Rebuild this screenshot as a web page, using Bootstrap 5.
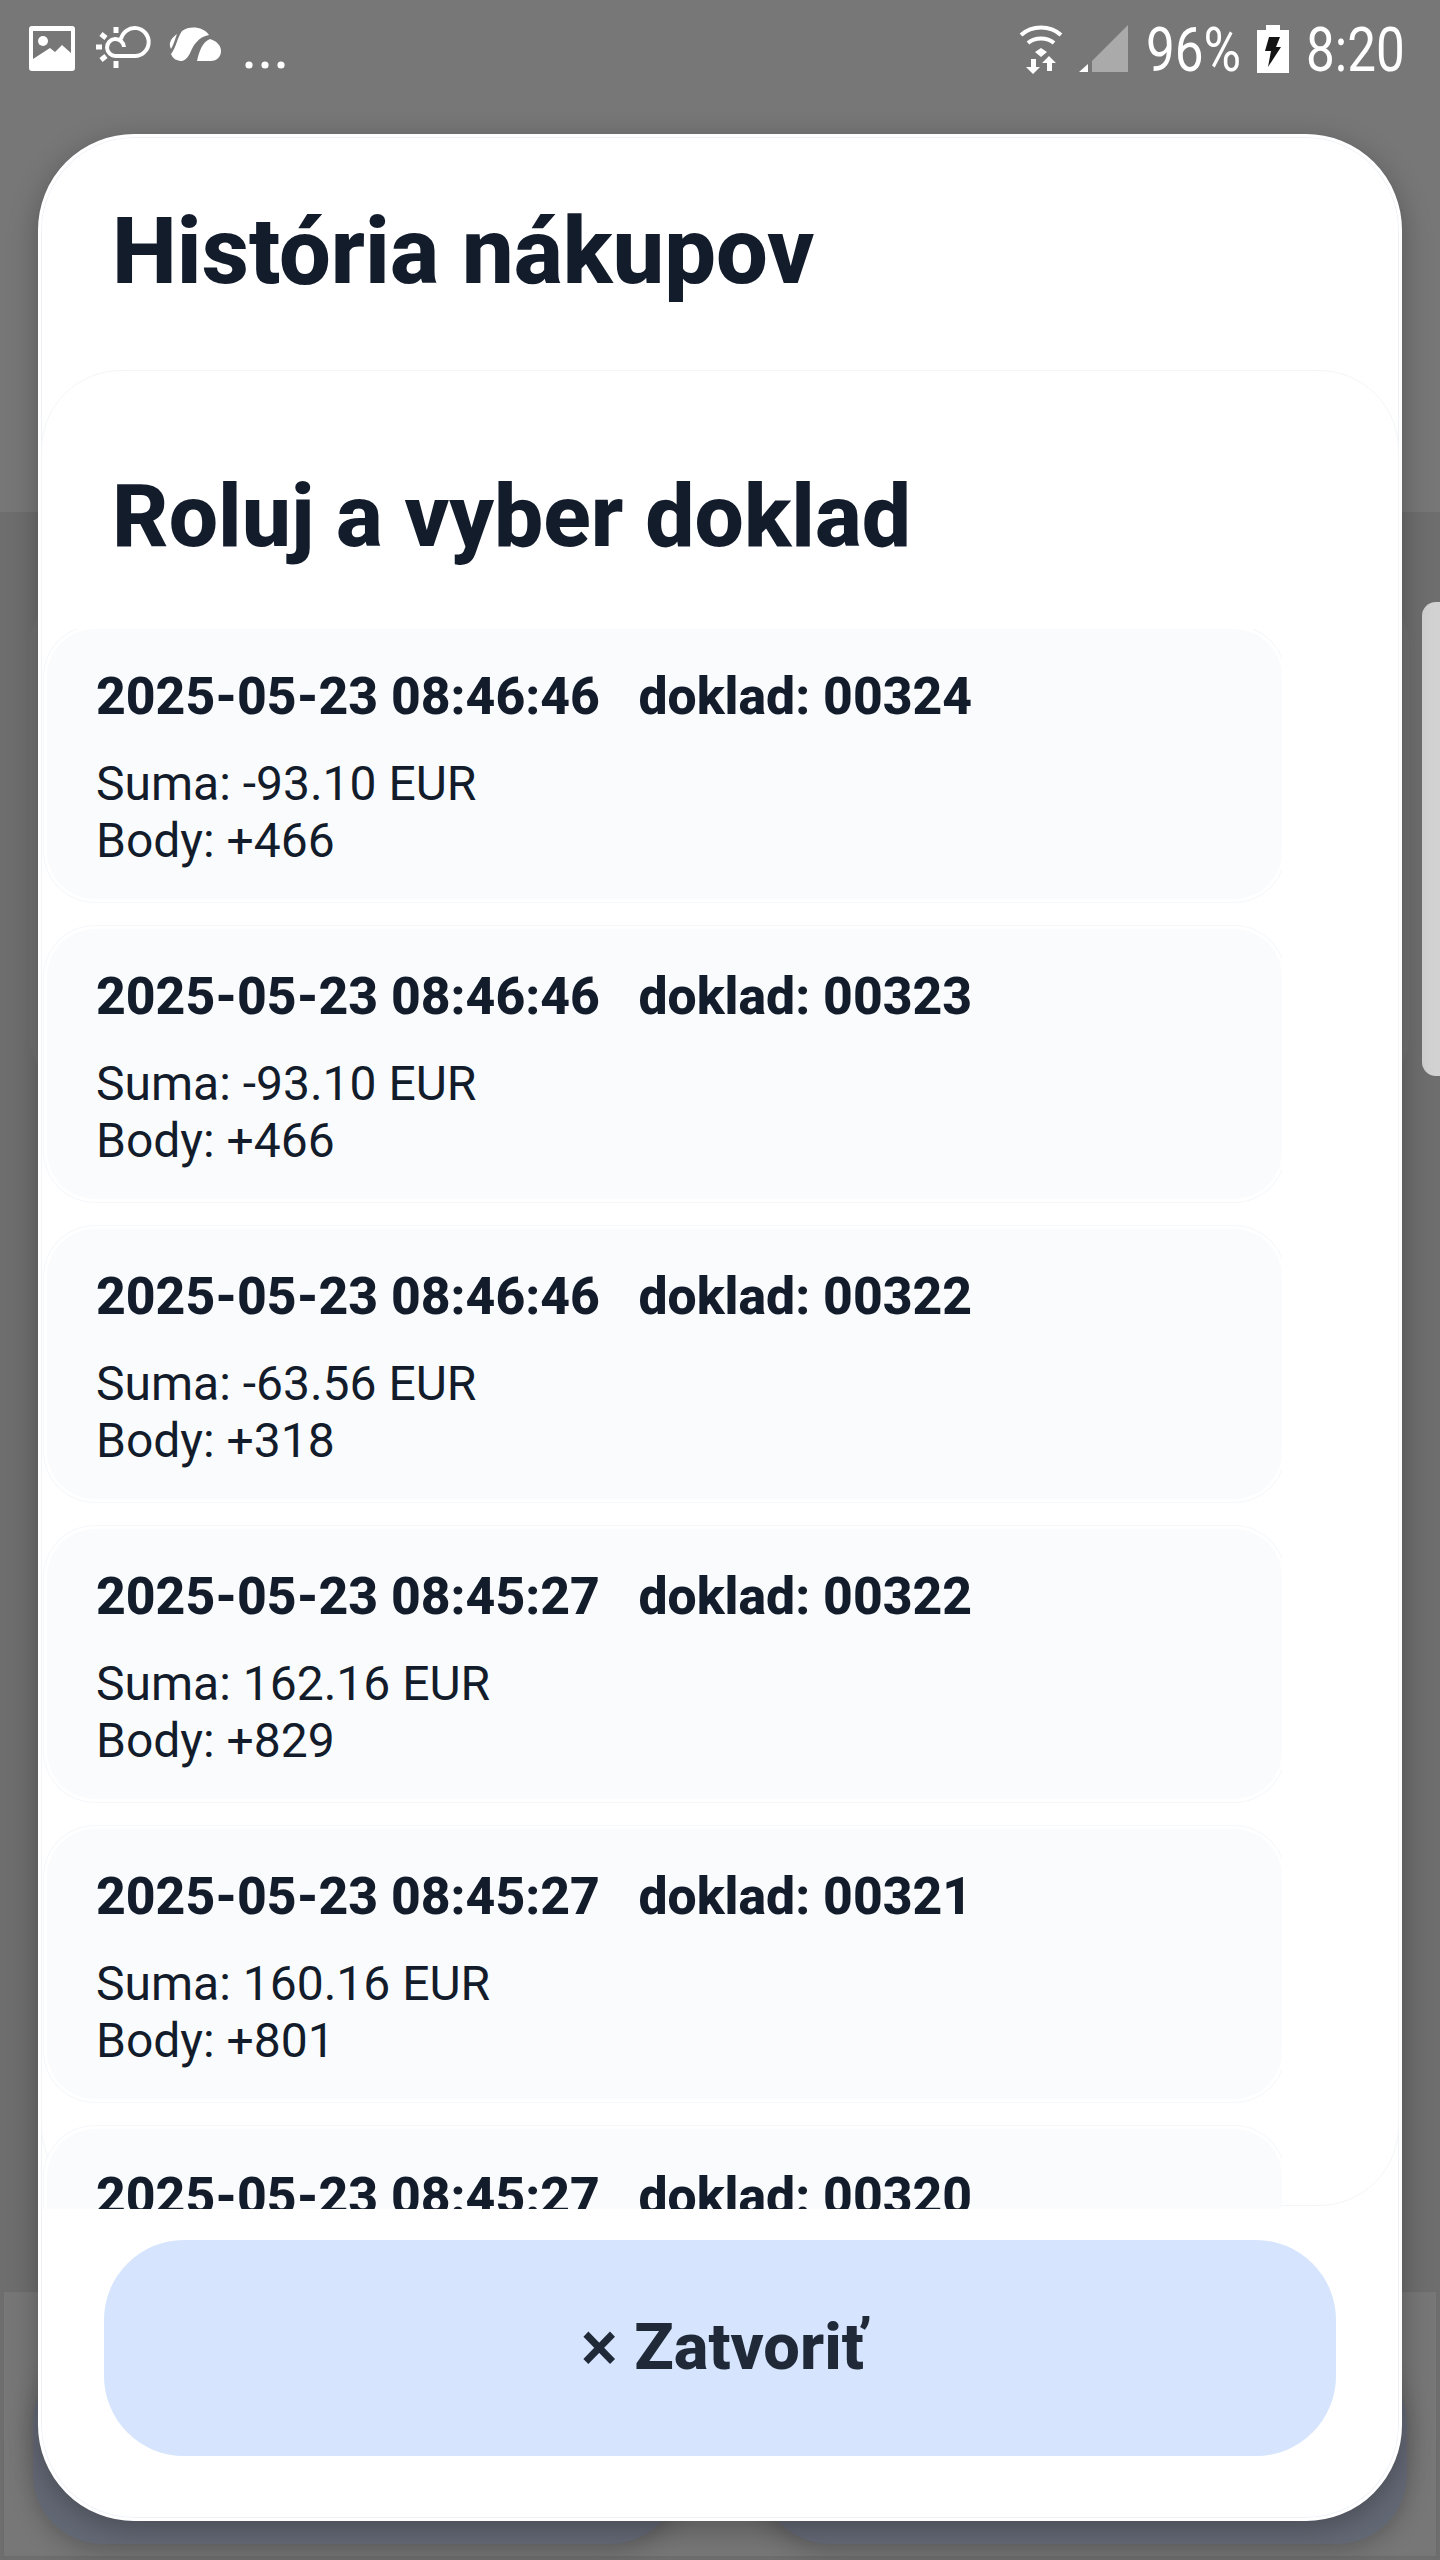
<!DOCTYPE html>
<html lang="sk">
<head>
  <meta charset="UTF-8">
  <meta name="viewport" content="width=device-width, initial-scale=1.0">
  <title>História nákupov</title>
  <link rel="stylesheet" href="https://cdn.jsdelivr.net/npm/bootstrap@5.3.0/dist/css/bootstrap.min.css">
  <style>
    body { background: #6e6e6e; font-family: Roboto, "Liberation Sans", sans-serif; color: #131c2b; }
    .screen { width: 1440px; height: 2560px; position: relative; overflow: hidden; }

    /* dimmed page behind the dialog */
    .top-band { height: 512px; background: #777; padding: 25px 35px 0 29px; }
    .mid-band { height: 1780px; padding-top: 90px; }
    .under-card { width: 1379px; height: 478px; margin-left: 30px; border-radius: 40px; background: #727272; }
    .scroll-pill { width: 18px; height: 474px; background: #d2d2d2; border-radius: 14px 0 0 14px; }
    .bottom-band { height: 264px; margin: 0 4px; background: #777; box-shadow: 0 0 0 1px #6c6c6c; padding: 61px 29px 12px; gap: 80px; }
    .under-btn { flex: 1; border-radius: 70px; background: #646976; box-shadow: 0 6px 24px rgba(0,0,0,.22); }

    /* status bar */
    .status-left { gap: 21px; }
    .status-right { height: 50px; }
    .status-txt { font-size: 61px; font-weight: 400; color: #fff; line-height: 50px; display: inline-block; transform: scaleX(.84); }
    .status-pct { width: 94px; margin-left: 17px; margin-right: 3px; transform-origin: left center; white-space: nowrap; }
    .status-time { width: 98px; margin-left: 17px; margin-right: 1px; transform-origin: left center; white-space: nowrap; }

    /* dialog */
    .sheet { position: absolute; left: 38px; top: 134px; width: 1364px; height: 2387px; background: #fff; border: 3px solid #fff; border-radius: 96px; box-shadow: inset 0 0 0 1px #eef2f8, 0 8px 30px rgba(0,0,0,.28); }
    .sheet-title { font-size: 92px; font-weight: 800; line-height: 1; margin: 0; height: 233px; padding: 69px 0 0 71px; color: #131c2b; }
    .sheet-body { height: 1836px; border: 1px solid #f3f5f9; border-radius: 80px; }
    .sheet-sub { font-size: 87.6px; font-weight: 800; line-height: 1; margin: 0; padding: 102px 0 0 70px; height: 258px; color: #131c2b; }
    .entries { height: 1580px; overflow: hidden; padding: 0 0 0 5px; width: 1240px; }
    .entry { height: 270px; margin-bottom: 30px; background: #fafbfd; border: 0; border-radius: 48px; padding: 38px 49px 0; color: #131c2b; box-shadow: 0 0 0 3px #fff, 0 0 0 4px #f5f7fa; }
    .entry-head { font-size: 51.7px; font-weight: 800; line-height: 60px; margin-bottom: 28px; white-space: pre; }
    .entry-line { font-size: 48px; line-height: 57px; }
    .sheet-foot { padding: 34px 63px 0; }
    .close-btn { display: block; width: 1232px; height: 216px; border: 0; border-radius: 80px; padding-left: 18px; background: #d6e4fe; color: #1f2937; font-size: 65px; font-weight: 800; }
    .close-btn:hover, .close-btn:active { background: #d6e4fe !important; color: #1f2937 !important; }
    .close-x { font-size: 70px; font-weight: 500; line-height: 1; vertical-align: -2px; }
  </style>
</head>
<body>
<div class="screen">

  <!-- pozadie -->
  <div class="top-band d-flex justify-content-between align-items-start">
    <div class="status-left d-flex align-items-start">
      <svg width="46" height="46" viewBox="0 0 46 46"><rect y="1" width="46" height="45" rx="3" fill="#fff"/><path d="M4 6H42V28L33 20L26 27L21 23L4 34Z" fill="#777"/><circle cx="14" cy="16" r="5" fill="#fff"/></svg>
      <svg width="57" height="46" viewBox="96 27 57 46" fill="none" stroke="#fff" stroke-width="4" style="margin-left:-1px;margin-right:-4px"><path d="M125 49A8.5 8.5 0 1 0 117 58H136A14 14 0 1 0 122 41"/><path d="M117 29V35M117 63V70M97 49H103M102 36L107 40M102 62L107 58" stroke-width="5"/></svg>
      <svg width="53" height="40" viewBox="170 29 53 40" fill="#fff"><path d="M178 38C172 42 169 48 172 53C175 48 176 43 178 38Z"/><path d="M183 35C191 29 205 31 210 39C200 41 195 48 192 55C190 60 187 64 183 65C178 65 174 63 172 58C177 52 178 42 183 35Z"/><path d="M198 65C200 56 203 46 211 43C218 45 222 50 222 55C222 62 216 65 212 65Z"/></svg>
      <svg width="40" height="50" viewBox="245 28 40 50" fill="#fff" style="margin-left:2px"><circle cx="249" cy="68" r="3.6"/><circle cx="265" cy="68" r="3.6"/><circle cx="281" cy="68" r="3.6"/></svg>
    </div>
    <div class="status-right d-flex align-items-start">
      <svg width="44" height="50" viewBox="1017 24 44 50"><g fill="none" stroke="#fff" stroke-width="4"><path d="M1019 34C1030 24 1048 24 1059 34"/><path d="M1026 42C1033 36 1045 36 1052 42"/></g><path d="M1033 51L1039 47L1045 51L1039 56Z" fill="#fff"/><path d="M1029 58H1034V66H1038L1031 73L1024 66H1029ZM1045 70H1050V62H1054L1047 55L1040 62H1045Z" fill="#fff"/></svg>
      <svg width="50" height="48" viewBox="1077 25 50 48" style="margin-left:16px"><path d="M1090 72V61L1126 25V72Z" fill="#aaa"/><path d="M1077 72L1086 64V72Z" fill="#fff"/></svg>
      <span class="status-txt status-pct">96%</span>
      <svg width="32" height="48" viewBox="1256 25 32 48" style="margin-left:14px"><path d="M1256 30H1265V25H1279V30H1288V73H1256Z" fill="#fff"/><path d="M1268 37H1279L1275 47H1280L1267 67L1270 51H1264Z" fill="#141414"/></svg>
      <span class="status-txt status-time">8:20</span>
    </div>
  </div>
  <div class="mid-band d-flex justify-content-between align-items-start">
    <div class="under-card"></div>
    <div class="scroll-pill"></div>
  </div>
  <div class="bottom-band d-flex">
    <div class="under-btn"></div>
    <div class="under-btn"></div>
  </div>

  <!-- dialog -->
  <div class="sheet d-flex flex-column">
    <h1 class="sheet-title">História nákupov</h1>
    <div class="sheet-body">
      <h2 class="sheet-sub">Roluj a vyber doklad</h2>
      <div class="entries" id="entries"></div>
    </div>
    <div class="sheet-foot">
      <button type="button" class="btn close-btn"><span class="close-x">×</span> Zatvoriť</button>
    </div>
  </div>
</div>

<script>
  const doklady = [
    ['2025-05-23 08:46:46', '00324', '-93.10', '+466'],
    ['2025-05-23 08:46:46', '00323', '-93.10', '+466'],
    ['2025-05-23 08:46:46', '00322', '-63.56', '+318'],
    ['2025-05-23 08:45:27', '00322', '162.16', '+829'],
    ['2025-05-23 08:45:27', '00321', '160.16', '+801'],
    ['2025-05-23 08:45:27', '00320', '160.16', '+801']
  ];
  document.getElementById('entries').innerHTML = doklady.map(d => `
    <div class="card entry">
      <div class="entry-head">${d[0]}   doklad: ${d[1]}</div>
      <div class="entry-line">Suma: ${d[2]} EUR</div>
      <div class="entry-line">Body: ${d[3]}</div>
    </div>
  `).join('');
</script>
<script src="https://cdn.jsdelivr.net/npm/bootstrap@5.3.0/dist/js/bootstrap.bundle.min.js"></script>
</body>
</html>
